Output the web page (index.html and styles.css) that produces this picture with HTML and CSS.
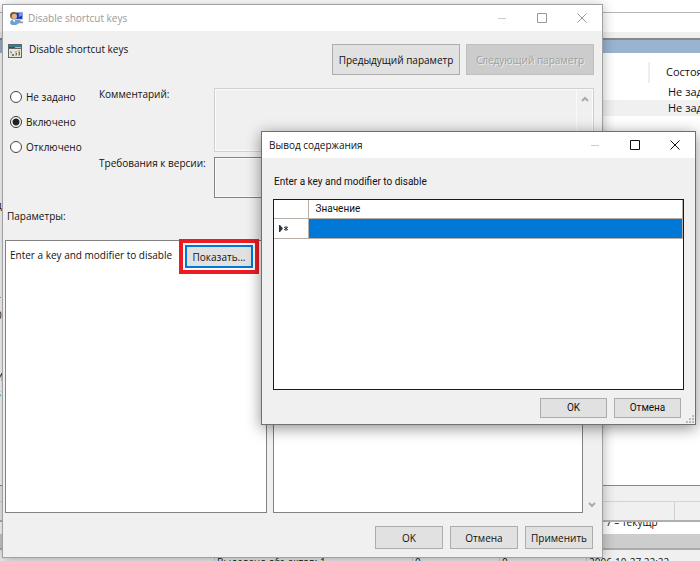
FILE: index.html
```html
<!DOCTYPE html>
<html lang="ru">
<head>
    <meta charset="UTF-8">
    <meta name="viewport" content="width=device-width, initial-scale=1.0">
    <title>Disable shortcut keys</title>
    <link rel="stylesheet" href="styles.css">
</head>
<body>
    <!-- Console and file manager behind the windows -->
    <main class="console">
        <div class="console-menu"></div>
        <div class="console-toolbar"></div>
        <div class="console-caption"></div>
        <div class="console-list">
            <div class="list-head">Состоя</div>
            <div class="list-row">Не зад</div>
            <div class="list-row selected">Не зад</div>
        </div>
        <div class="console-tabs"></div>
        <div class="console-status"><span></span></div>
        <div class="files-row"><span>7 – текущр</span></div>
        <div class="files-scroll"></div>
        <div class="files-status">
            <span>Выделено объектов: 1</span>
            <span>0</span>
            <span>0</span>
            <span>2006-10-27 22:22</span>
        </div>
    </main>
    <div class="left-edge">
        <span>д</span>
        <span>т</span>
        <span>0</span>
        <span>И</span>
        <span>s</span>
    </div>

    <!-- Policy window -->
    <section class="window policy">
        <header class="titlebar">
            <svg class="app-icon" viewBox="0 0 16 16">
                <path d="M5 1h10v9H5z" fill="#c3cbd8"/>
                <path d="M6 2h8v7H6z" fill="#1532c4"/>
                <path d="M10 2h4v3l-4 2z" fill="#6d93f2"/>
                <path d="M8 10h4v2H8zM7 12h8v2H7z" fill="#8d99aa"/>
                <circle cx="4" cy="5" r="4" fill="#73563d"/>
                <circle cx="5" cy="6" r="3" fill="#e0b58d"/>
                <path d="M0 14c0-6 9-6 10 0l-3 2H2z" fill="#69a3d2"/>
                <path d="M3 10l2 3 1-3z" fill="#fff"/>
            </svg>
            <h1>Disable shortcut keys</h1>
            <div class="caption-buttons">
                <button type="button" aria-label="Свернуть" disabled><svg viewBox="0 0 10 10"><path d="M1 5.500h8"/></svg></button>
                <button type="button" aria-label="Развернуть"><svg viewBox="0 0 10 10"><path d="M.5.500h9v9h-9z"/></svg></button>
                <button type="button" aria-label="Закрыть"><svg viewBox="0 0 10 10"><path d="M.5.500l9 9M9.500.500l-9 9"/></svg></button>
            </div>
        </header>

        <div class="policy-body">
            <div class="policy-head">
                <svg class="policy-icon" viewBox="0 0 14 14">
                    <path d="M0 0h14v14H0z" fill="#62656a"/>
                    <path d="M1 1h12v2H1z" fill="#2f7f91"/>
                    <path d="M7 3h6v1H7z" fill="#e4b944"/>
                    <path d="M1 3h6v1H1z" fill="#334f7c"/>
                    <path d="M1 5h12v8H1z" fill="#e8e5dc"/>
                    <path d="M2 7l2 1-1 2zM4 10h2v2H4z" fill="#777"/>
                    <path d="M7 7h2v5H7zM10 6h2v6h-2z" fill="#c7b98d"/>
                    <path d="M8 9h1v2H8zM11 8h1v3h-1z" fill="#646b72"/>
                </svg>
                <h2>Disable shortcut keys</h2>
                <button type="button" class="btn">Предыдущий параметр</button>
                <button type="button" class="btn" disabled>Следующий параметр</button>
            </div>

            <div class="policy-state">
                <div class="radios">
                    <label><input type="radio" name="state">Не задано</label>
                    <label><input type="radio" name="state" checked>Включено</label>
                    <label><input type="radio" name="state">Отключено</label>
                </div>
                <div class="fields">
                    <label for="comment">Комментарий:</label>
                    <div class="field">
                        <textarea id="comment" disabled></textarea>
                        <div class="scrollbar"><svg viewBox="0 0 8 6"><path d="M1 5l3-3 3 3"/></svg></div>
                    </div>
                    <label for="version">Требования к версии:</label>
                    <div class="field version">
                        <textarea id="version" readonly></textarea>
                    </div>
                </div>
            </div>

            <h3>Параметры:</h3>

            <div class="panels">
                <div class="panel options">
                    <span>Enter a key and modifier to disable</span>
                    <button type="button" class="btn show">Показать...</button>
                </div>
                <div class="panel help"></div>
                <div class="help-scroll"><svg viewBox="0 0 8 6"><path d="M1 1l3 3 3-3"/></svg></div>
            </div>

            <div class="policy-actions">
                <button type="button" class="btn">OK</button>
                <button type="button" class="btn">Отмена</button>
                <button type="button" class="btn">Применить</button>
            </div>
        </div>
    </section>

    <!-- Contents dialog -->
    <section class="window dialog">
        <header class="titlebar">
            <h1>Вывод содержания</h1>
            <div class="caption-buttons">
                <button type="button" aria-label="Свернуть" disabled><svg viewBox="0 0 10 10"><path d="M1 5.500h8"/></svg></button>
                <button type="button" aria-label="Развернуть"><svg viewBox="0 0 10 10"><path d="M.5.500h9v9h-9z"/></svg></button>
                <button type="button" aria-label="Закрыть"><svg viewBox="0 0 10 10"><path d="M.5.500l9 9M9.500.500l-9 9"/></svg></button>
            </div>
        </header>
        <div class="dialog-body">
            <p>Enter a key and modifier to disable</p>
            <div class="grid">
                <table>
                    <thead>
                        <tr><th class="marker"></th><th>Значение</th></tr>
                    </thead>
                    <tbody>
                        <tr>
                            <td class="marker">
                                <svg viewBox="0 0 10 7"><path d="M0 0h1l3 3.500L1 7H0z"/><path d="M7 1v5M5 2l4 3M9 2L5 5" class="star"/></svg>
                            </td>
                            <td class="value"></td>
                        </tr>
                    </tbody>
                </table>
            </div>
            <div class="dialog-actions">
                <button type="button" class="btn">OK</button>
                <button type="button" class="btn">Отмена</button>
            </div>
        </div>
        <svg class="grip" viewBox="0 0 8 8"><path d="M6 0h2v2H6zM3 3h2v2H3zM6 3h2v2H6zM0 6h2v2H0zM3 6h2v2H3zM6 6h2v2H6z"/></svg>
    </section>
</body>
</html>
```

FILE: styles.css
```css
* {
    box-sizing: border-box;
}

body {
    position: relative;
    margin: 0;
    height: 100vh;
    overflow: hidden;
    background: #fff;
    color: #111;
    font-family: "Open Sans", "Noto Sans", sans-serif;
    font-size: 10px;
    line-height: 16px;
}

h1, h2, h3, p {
    margin: 0;
    font-size: inherit;
    font-weight: normal;
}

button, textarea {
    font: inherit;
    color: inherit;
}

/* Background */
.console {
    display: flex;
    flex-direction: column;
    height: 100%;
}

.console-menu {
    height: 13px;
    border-bottom: 1px solid #b4b4b4;
}

.console-toolbar {
    height: 27px;
    border-top: 19px solid #fff;
    border-bottom: 2px solid #888;
    background: #f0f0f0;
}

.console-caption {
    height: 13px;
    background: #99b4d1;
}

.console-list {
    flex: 1;
    padding-top: 9px;
    border-bottom: 1px solid #888;
    font-size: 11px;
}

.list-head,
.list-row {
    margin-left: 600px;
    padding-left: 68px;
    white-space: nowrap;
}

.list-head {
    margin-left: 648px;
    margin-bottom: 1px;
    padding: 2px 0 3px 16px;
    border-left: 2px solid #eee;
}

.list-row.selected {
    background: #f0f0f0;
}

.console-tabs {
    height: 16px;
    border-bottom: 1px solid #d4d4d4;
    background: #f0f0f0;
}

.console-status {
    display: flex;
    justify-content: flex-end;
    height: 20px;
    border-bottom: 2px solid #b0b0b0;
    background: #f0f0f0;
}

.console-status span {
    width: 26px;
    border-left: 1px solid #d0d0d0;
}

.files-row {
    height: 12px;
    padding-left: 606px;
    overflow: hidden;
    line-height: 0;
}

.files-scroll {
    height: 14px;
    background: #cdcdcd;
}

.files-status {
    display: grid;
    grid-template-columns: 198px 87px 87px 1fr;
    height: 13px;
    padding-left: 214px;
    border-top: 2px solid #aaa;
    background: #f0f0f0;
    overflow: hidden;
}

.files-status span {
    padding: 4px 0 0 2px;
    border-left: 1px solid #ccc;
    white-space: nowrap;
}

.left-edge {
    position: absolute;
    top: 197px;
    left: -4px;
    display: grid;
    grid-template-rows: 94px 16px 62px 16px 16px;
    width: 8px;
}

/* Windows */
.window {
    position: absolute;
    display: flex;
    flex-direction: column;
    border: 1px solid #a0a0a0;
    background: #f0f0f0;
    box-shadow: 0 2px 12px rgba(0, 0, 0, 0.3);
}

.policy {
    top: 4px;
    right: 97px;
    bottom: 3px;
    left: 2px;
}

.dialog {
    top: 131px;
    right: 4px;
    bottom: 136px;
    left: 261px;
    border-color: #707070;
    box-shadow: 0 3px 14px rgba(0, 0, 0, 0.45);
}

.titlebar {
    display: flex;
    align-items: center;
    height: 26px;
    padding-left: 7px;
    background: #fff;
}

.titlebar h1 {
    flex: 1;
}

.policy .titlebar {
    color: #999;
}

.app-icon {
    width: 14px;
    height: 14px;
    margin-right: 4px;
}

.caption-buttons {
    display: flex;
}

.caption-buttons button {
    display: grid;
    place-items: center;
    width: 40px;
    height: 26px;
    padding: 0;
    border: 0;
    background: none;
}

.caption-buttons svg {
    width: 10px;
    height: 10px;
    fill: none;
    stroke: currentColor;
}

.caption-buttons button:disabled {
    color: #ccc;
}

.btn {
    padding: 0;
    border: 1px solid #adadad;
    background: #e1e1e1;
}

.btn:disabled {
    border-color: #bfbfbf;
    background: #ccc;
    color: #a0a0a0;
    text-shadow: 1px 1px #eee;
}

/* Policy window content */
.policy-body {
    display: flex;
    flex: 1;
    flex-direction: column;
    padding: 13px 2px 8px;
}

.policy-head {
    display: flex;
    gap: 6px;
    height: 44px;
    padding: 0 6px 0 3px;
}

.policy-head h2 {
    flex: 1;
    padding-left: 1px;
    line-height: 10px;
}

.policy-head .btn {
    width: 128px;
    height: 31px;
}

.policy-icon {
    width: 14px;
    height: 14px;
}

.policy-state {
    display: flex;
    padding: 0 6px 0 5px;
}

.radios {
    display: flex;
    flex-direction: column;
    gap: 9px;
    width: 89px;
    padding-top: 1px;
}

.radios label {
    display: flex;
    gap: 4px;
    align-items: center;
}

.radios input {
    appearance: none;
    width: 12px;
    height: 12px;
    margin: 0;
    border: 1px solid #444;
    border-radius: 50%;
    background: #fff;
}

.radios input:checked {
    border-color: #333;
    background: radial-gradient(circle, #222 3px, #fff 4px);
}

.fields {
    display: grid;
    flex: 1;
    grid-template-columns: 115px 1fr;
    grid-template-rows: 64px 41px;
    row-gap: 5px;
    line-height: 12px;
}

.fields label {
    white-space: nowrap;
}

.field {
    display: flex;
    border: 1px solid #d0d0d0;
    outline: 1px solid #fafafa;
    outline-offset: -2px;
}

.field.version {
    border-color: #828282;
}

.field textarea {
    flex: 1;
    border: 0;
    background: none;
    resize: none;
}

.scrollbar {
    width: 17px;
    padding-top: 7px;
    border-left: 1px solid #fafafa;
}

.scrollbar svg,
.help-scroll svg {
    display: block;
    width: 8px;
    height: 6px;
    margin: 0 auto;
    fill: none;
    stroke: #aaa;
    stroke-width: 2;
}

.policy-body h3 {
    margin: 10px 2px 16px;
}

.panels {
    display: flex;
    flex: 1;
}

.panel {
    border: 1px solid #828282;
    background: #fff;
}

.options {
    display: flex;
    justify-content: space-between;
    align-items: flex-start;
    width: 262px;
    margin-right: 6px;
    padding: 4px 13px 4px 4px;
}

.options span {
    line-height: 20px;
    white-space: nowrap;
}

.btn.show {
    width: 68px;
    height: 23px;
    border: 2px solid #0078d7;
    outline: 4px solid #ed1c24;
    outline-offset: 2px;
}

.help {
    flex: 1;
}

.help-scroll {
    display: flex;
    align-items: flex-end;
    width: 17px;
    padding-bottom: 5px;
}

.policy-actions {
    display: flex;
    gap: 7px;
    justify-content: flex-end;
    padding: 13px 7px 0 0;
}

.policy-actions .btn {
    width: 68px;
    height: 23px;
}

/* Dialog content */
.dialog-body {
    display: flex;
    flex: 1;
    flex-direction: column;
    padding: 16px 11px 6px;
    font-family: Roboto, "Liberation Sans", sans-serif;
}

.dialog-body p {
    margin-bottom: 9px;
    padding-left: 1px;
}

.grid {
    flex: 1;
    border: 1px solid #1a1a1a;
    background: #fff;
}

.grid table {
    width: 100%;
    border-collapse: collapse;
    table-layout: fixed;
}

.grid th,
.grid td {
    height: 18px;
    padding: 0 7px;
    border-right: 1px solid #b8b0a8;
    border-bottom: 1px solid #b8b0a8;
    font-weight: normal;
    line-height: 16px;
    text-align: left;
}

.grid td {
    height: 20px;
}

.grid .marker {
    width: 34px;
    padding: 0 5px;
}

.grid .marker svg {
    display: block;
    width: 10px;
    height: 7px;
    fill: #333;
}

.grid .star {
    stroke: #333;
}

.grid .value {
    background: #0078d7;
}

.dialog-actions {
    display: flex;
    gap: 7px;
    justify-content: flex-end;
    padding: 8px 3px 0 0;
}

.dialog-actions .btn {
    width: 67px;
    height: 20px;
}

.grip {
    position: absolute;
    right: 1px;
    bottom: 1px;
    width: 8px;
    height: 8px;
    fill: #bbb;
}
```
